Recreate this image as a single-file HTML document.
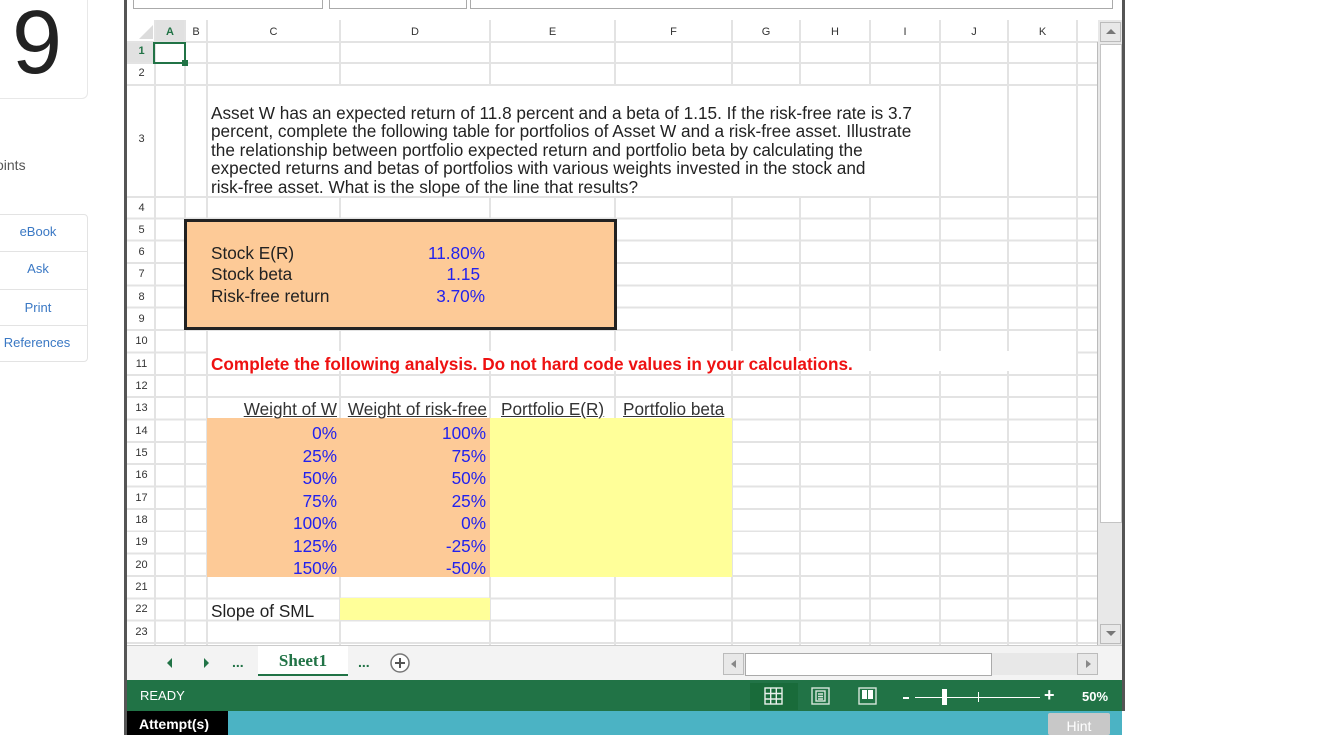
<!DOCTYPE html>
<html><head><meta charset="utf-8"><style>
*{margin:0;padding:0;box-sizing:border-box}
body{width:1333px;height:735px;background:#fff;position:relative;overflow:hidden;font-family:"Liberation Sans",Arial,sans-serif}
.a{position:absolute}
.vl{position:absolute;width:2px;background:#e3e3e3}
.hl{position:absolute;height:2px;background:#e3e3e3}
.rn{position:absolute;left:128px;width:27px;text-align:center;font-size:11px;color:#333}
.ch{position:absolute;top:20px;height:22px;line-height:24px;text-align:center;font-size:11px;color:#333}
.t{position:absolute;font-size:17.2px;color:#222;white-space:nowrap;line-height:18px}
.b{color:#2222ee}
.r{text-align:right}
.u{text-decoration:underline;color:#333}
.side{position:absolute;left:0;width:76px;text-align:center;font-size:13px;color:#3a78c4}
.sl{position:absolute;left:0;width:88px;height:1px;background:#e3e3e3}
</style></head><body>
<!-- left sidebar -->
<div class="a" style="left:-10px;top:-10px;width:98px;height:109px;border:1px solid #e8e8e8;border-radius:6px"></div>
<div class="a" style="left:12px;top:-12px;font-size:90px;color:#222;line-height:110px">9</div>
<div class="a" style="left:-4px;top:157px;font-size:14px;color:#555">oints</div>
<div class="a" style="left:-10px;top:214px;width:98px;height:148px;border:1px solid #e3e3e3;border-radius:4px"></div>
<div class="side" style="top:214px;height:37px;line-height:36px">eBook</div>
<div class="sl" style="top:251px"></div>
<div class="side" style="top:251px;height:38px;line-height:36px">Ask</div>
<div class="sl" style="top:289px"></div>
<div class="side" style="top:289px;height:36px;line-height:38px">Print</div>
<div class="sl" style="top:325px"></div>
<div class="side" style="top:325px;height:37px;line-height:36px;left:-1px">References</div>

<!-- frame borders -->
<div class="a" style="left:124px;top:0;width:3px;height:735px;background:#555"></div>
<div class="a" style="left:1122px;top:0;width:3px;height:711px;background:#555"></div>
<!-- top inputs -->
<div class="a" style="left:133px;top:-2px;width:190px;height:11px;border:1px solid #aaa"></div>
<div class="a" style="left:329px;top:-2px;width:138px;height:11px;border:1px solid #aaa"></div>
<div class="a" style="left:470px;top:-2px;width:643px;height:11px;border:1px solid #aaa"></div>

<!-- column header -->
<div class="a" style="left:155px;top:20px;width:30px;height:22px;background:#e1e1e1"></div>
<svg class="a" style="left:138px;top:24px" width="16" height="16"><polygon points="15,1 15,15 1,15" fill="#dcdcdc"/></svg>
<div class="ch" style="left:155px;width:30px;color:#217346;font-weight:bold">A</div>
<div class="ch" style="left:185px;width:22px">B</div>
<div class="ch" style="left:207px;width:133px">C</div>
<div class="ch" style="left:340px;width:150px">D</div>
<div class="ch" style="left:490px;width:125px">E</div>
<div class="ch" style="left:615px;width:117px">F</div>
<div class="ch" style="left:732px;width:68px">G</div>
<div class="ch" style="left:800px;width:70px">H</div>
<div class="ch" style="left:870px;width:70px">I</div>
<div class="ch" style="left:940px;width:68px">J</div>
<div class="ch" style="left:1008px;width:69px">K</div>

<div class="a" style="left:127px;top:43px;width:28px;height:20px;background:#e1e1e1"></div>

<!-- horizontal grid lines -->
<div class="hl" style="left:127px;top:41px;width:971px"></div>
<div class="hl" style="left:127px;top:62px;width:971px"></div>
<div class="hl" style="left:127px;top:84px;width:971px"></div>
<div class="hl" style="left:127px;top:196px;width:971px"></div>
<div class="a" style="left:127px;top:197px;width:971px;height:448px;background:repeating-linear-gradient(to bottom,transparent 0,transparent 20.35px,#e3e3e3 20.35px,#e3e3e3 22.35px)"></div>

<!-- vertical grid lines -->
<div class="vl" style="left:154px;top:20px;height:625px"></div>
<div class="vl" style="left:184px;top:20px;height:625px"></div>
<div class="vl" style="left:206px;top:20px;height:625px"></div>
<div class="vl" style="left:339px;top:20px;height:625px"></div>
<div class="vl" style="left:489px;top:20px;height:625px"></div>
<div class="vl" style="left:614px;top:20px;height:625px"></div>
<div class="vl" style="left:731px;top:20px;height:625px"></div>
<div class="vl" style="left:799px;top:20px;height:625px"></div>
<div class="vl" style="left:869px;top:20px;height:625px"></div>
<div class="vl" style="left:939px;top:20px;height:625px"></div>
<div class="vl" style="left:1007px;top:20px;height:625px"></div>
<div class="vl" style="left:1076px;top:20px;height:625px"></div>
<div class="a" style="left:1097px;top:42px;width:1px;height:603px;background:#bbb"></div>

<!-- spill overlays -->
<div class="a" style="left:208px;top:86px;width:731px;height:110px;background:#fff"></div>
<div class="a" style="left:208px;top:351px;width:868px;height:20px;background:#fff"></div>

<!-- row numbers -->
<div class="rn" style="top:45px;color:#217346;font-weight:bold">1</div>
<div class="rn" style="top:67px">2</div>
<div class="rn" style="top:133px">3</div>
<div class="rn" style="top:202px">4</div>
<div class="rn" style="top:224px">5</div>
<div class="rn" style="top:246px">6</div>
<div class="rn" style="top:268px">7</div>
<div class="rn" style="top:291px">8</div>
<div class="rn" style="top:313px">9</div>
<div class="rn" style="top:335px">10</div>
<div class="rn" style="top:358px">11</div>
<div class="rn" style="top:380px">12</div>
<div class="rn" style="top:402px">13</div>
<div class="rn" style="top:425px">14</div>
<div class="rn" style="top:447px">15</div>
<div class="rn" style="top:469px">16</div>
<div class="rn" style="top:492px">17</div>
<div class="rn" style="top:514px">18</div>
<div class="rn" style="top:536px">19</div>
<div class="rn" style="top:559px">20</div>
<div class="rn" style="top:581px">21</div>
<div class="rn" style="top:603px">22</div>
<div class="rn" style="top:626px">23</div>

<div class="a" style="left:153px;top:42px;width:33px;height:22px;border:2px solid #217346"></div>
<div class="a" style="left:182px;top:60px;width:6px;height:6px;background:#217346"></div>

<!-- paragraph -->
<div class="t" style="left:211px;top:104px;line-height:18.4px">Asset W has an expected return of 11.8 percent and a beta of 1.15. If the risk-free rate is 3.7<br>percent, complete the following table for portfolios of Asset W and a risk-free asset. Illustrate<br>the relationship between portfolio expected return and portfolio beta by calculating the<br>expected returns and betas of portfolios with various weights invested in the stock and<br>risk-free asset. What is the slope of the line that results?</div>

<!-- orange box -->
<div class="a" style="left:184px;top:219px;width:433px;height:111px;background:#fdca97;border:3px solid #222"></div>
<div class="t" style="left:211px;top:244px">Stock E(R)</div>
<div class="t" style="left:211px;top:265px">Stock beta</div>
<div class="t" style="left:211px;top:287px">Risk-free return</div>
<div class="t b r" style="left:380px;width:105px;top:244px">11.80%</div>
<div class="t b r" style="left:380px;width:100px;top:265px">1.15</div>
<div class="t b r" style="left:380px;width:105px;top:287px">3.70%</div>

<div class="t" style="left:211px;top:355px;color:#ee1111;font-weight:bold">Complete the following analysis. Do not hard code values in your calculations.</div>

<!-- table -->
<div class="a" style="left:207px;top:418px;width:283px;height:159px;background:#fdca97"></div>
<div class="a" style="left:490px;top:418px;width:242px;height:159px;background:#ffff99"></div>
<div class="a" style="left:340px;top:598px;width:150px;height:22px;background:#ffff99"></div>
<div class="t u r" style="left:200px;width:137px;top:400px">Weight of W</div>
<div class="t u r" style="left:330px;width:157px;top:400px">Weight of risk-free</div>
<div class="t u" style="left:501px;top:400px">Portfolio E(R)</div>
<div class="t u" style="left:623px;top:400px">Portfolio beta</div>
<div class="t b r" style="left:207px;width:130px;top:422px;line-height:22.5px">0%<br>25%<br>50%<br>75%<br>100%<br>125%<br>150%</div>
<div class="t b r" style="left:340px;width:146px;top:422px;line-height:22.5px">100%<br>75%<br>50%<br>25%<br>0%<br>-25%<br>-50%</div>
<div class="t" style="left:211px;top:602px">Slope of SML</div>

<!-- vertical scrollbar -->
<div class="a" style="left:1098px;top:20px;width:24px;height:625px;background:#e8e8e8"></div>
<div class="a" style="left:1100px;top:22px;width:21px;height:20px;border:1px solid #bbb;background:#e8e8e8"></div>
<svg class="a" style="left:1105px;top:28px" width="12" height="8"><polygon points="6,1 11,6 1,6" fill="#777"/></svg>
<div class="a" style="left:1100px;top:44px;width:22px;height:479px;background:#fff;border:1px solid #c4c4c4"></div>
<div class="a" style="left:1100px;top:624px;width:21px;height:20px;border:1px solid #bbb;background:#e8e8e8"></div>
<svg class="a" style="left:1105px;top:630px" width="12" height="8"><polygon points="1,1 11,1 6,6" fill="#777"/></svg>

<!-- tab bar -->
<div class="a" style="left:127px;top:645px;width:995px;height:35px;background:#f3f3f3;border-top:1px solid #ccc"></div>
<svg class="a" style="left:163px;top:656px" width="50" height="14"><polygon points="9,2 9,12 4,7" fill="#217346"/><polygon points="41,2 41,12 46,7" fill="#217346"/></svg>
<div class="a" style="left:232px;top:654px;font-size:14px;font-weight:bold;color:#217346">...</div>
<div class="a" style="left:258px;top:646px;width:90px;height:30px;background:#fff;border-bottom:2px solid #217346;text-align:center;font-family:'Liberation Serif',serif;font-weight:bold;font-size:17px;color:#217346;line-height:30px">Sheet1</div>
<div class="a" style="left:358px;top:654px;font-size:14px;font-weight:bold;color:#217346">...</div>
<svg class="a" style="left:389px;top:652px" width="22" height="22"><circle cx="11" cy="11" r="9" fill="#fff" stroke="#777" stroke-width="1.5"/><path d="M11 6v10M6 11h10" stroke="#555" stroke-width="2"/></svg>
<div class="a" style="left:723px;top:653px;width:374px;height:22px;background:#e8e8e8"></div>
<div class="a" style="left:723px;top:653px;width:21px;height:22px;border:1px solid #bbb"></div>
<svg class="a" style="left:729px;top:659px" width="10" height="10"><polygon points="7,1 7,9 2,5" fill="#888"/></svg>
<div class="a" style="left:745px;top:653px;width:247px;height:23px;background:#fff;border:1px solid #aaa"></div>
<div class="a" style="left:1077px;top:653px;width:21px;height:22px;border:1px solid #bbb"></div>
<svg class="a" style="left:1083px;top:659px" width="10" height="10"><polygon points="3,1 3,9 8,5" fill="#888"/></svg>

<!-- status bar -->
<div class="a" style="left:127px;top:680px;width:995px;height:31px;background:#217346"></div>
<div class="a" style="left:140px;top:688px;font-size:13px;color:#fff">READY</div>
<div class="a" style="left:750px;top:683px;width:48px;height:27px;background:#196b3a"></div>
<svg class="a" style="left:764px;top:687px" width="20" height="18"><g stroke="#e8f0ea" stroke-width="1.4" fill="none"><rect x="1" y="1" width="17" height="16"/><path d="M1 6.5h17M1 12h17M6.7 1v16M12.3 1v16"/></g></svg>
<svg class="a" style="left:811px;top:687px" width="20" height="18"><g stroke="#d8e6dc" stroke-width="1.4" fill="none"><rect x="1" y="1" width="17" height="16"/><rect x="5" y="4" width="9" height="10"/><path d="M7 7h5M7 9.5h5M7 12h5"/></g></svg>
<svg class="a" style="left:858px;top:687px" width="20" height="18"><g stroke="#d8e6dc" stroke-width="1.4" fill="none"><rect x="1" y="1" width="17" height="16"/></g><rect x="4" y="3" width="5" height="9" fill="#fff"/><rect x="10" y="3" width="5" height="9" fill="#fff"/></svg>
<div class="a" style="left:903px;top:697px;width:6px;height:2px;background:#fff"></div>
<div class="a" style="left:915px;top:697px;width:125px;height:1px;background:#fff"></div>
<div class="a" style="left:942px;top:689px;width:5px;height:16px;background:#fff"></div>
<div class="a" style="left:978px;top:692px;width:1px;height:10px;background:#fff"></div>
<div class="a" style="left:1044px;top:685px;font-size:18px;font-weight:bold;color:#fff">+</div>
<div class="a" style="left:1082px;top:689px;font-size:13px;font-weight:bold;color:#fff">50%</div>

<!-- bottom band -->
<div class="a" style="left:127px;top:711px;width:995px;height:24px;background:#4bb3c4"></div>
<div class="a" style="left:127px;top:711px;width:101px;height:24px;background:#000;color:#fff;font-weight:bold;font-size:14px;line-height:26px;padding-left:12px">Attempt(s)</div>
<div class="a" style="left:1048px;top:713px;width:62px;height:22px;background:#c8c8c8;color:#fff;font-size:14px;text-align:center;line-height:26px;border-radius:2px">Hint</div>
</body></html>
